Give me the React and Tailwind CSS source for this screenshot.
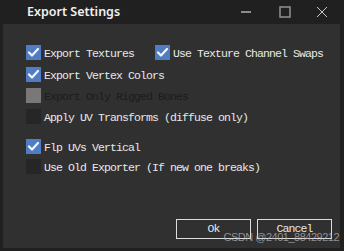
import React from 'react';

const mono = { fontFamily: '"Liberation Mono", "DejaVu Sans Mono", monospace' };

// state: 'on' | 'off' | 'disabled'
function Box({ state }) {
  if (state === 'on') {
    return (
      <div className="w-[15px] h-[15px] shrink-0 bg-[#4f7cc3] flex items-center justify-center">
        <svg width="15" height="15" viewBox="0 0 15 15">
          <path d="M3 7.5 L6 10.5 L12 4" fill="none" stroke="#f4f6fa" strokeWidth="2.2" strokeLinecap="round" strokeLinejoin="round" />
        </svg>
      </div>
    );
  }
  if (state === 'disabled') return <div className="w-[15px] h-[15px] shrink-0 bg-[#787878]" />;
  return <div className="w-[15px] h-[15px] shrink-0 bg-[#262626]" />;
}

function Check({ state, label, className = '' }) {
  return (
    <div className={`flex items-center h-[15px] gap-[3px] ${className}`}>
      <Box state={state} />
      <span
        style={mono}
        className={`text-[11.5px] tracking-[-0.9px] whitespace-nowrap leading-none pt-[2px] ${
          state === 'disabled' ? 'text-[#1c1c1c]' : 'text-[#e8e8e8]'
        }`}
      >
        {label}
      </span>
    </div>
  );
}

function Btn({ children }) {
  return (
    <button
      style={mono}
      className="w-[75px] h-[20px] border border-[#dcdcdc] bg-[#303030] text-[#e8e8e8] text-[11.5px] tracking-[-0.9px] leading-none flex items-center justify-center"
    >
      {children}
    </button>
  );
}

export default function App() {
  return (
    <div className="w-[344px] h-[251px] bg-[#202020] flex flex-col overflow-hidden">
      {/* title bar */}
      <div className="h-[24px] flex items-center shrink-0">
        <span
          className="ml-[27px] text-[12.5px] font-semibold text-[#f0f0f0] leading-none"
          style={{ fontFamily: '"Noto Sans", "Open Sans", sans-serif' }}
        >
          Export Settings
        </span>
        <div className="ml-auto flex items-center h-full">
          <svg width="12" height="12" viewBox="0 0 12 12" className="mr-[27px]">
            <path d="M1 6 H11" stroke="#8c8c8c" strokeWidth="2" />
          </svg>
          <svg width="12" height="12" viewBox="0 0 12 12" className="mr-[25px]">
            <rect x="1" y="1" width="10" height="10" fill="none" stroke="#8c8c8c" strokeWidth="1.6" />
          </svg>
          <svg width="12" height="12" viewBox="0 0 12 12" className="mr-[16px]">
            <path d="M1 1 L11 11 M11 1 L1 11" stroke="#c8c8c8" strokeWidth="1" />
          </svg>
        </div>
      </div>

      {/* body */}
      <div className="relative ml-[3px] w-[337px] h-[224px] bg-[#303030] flex flex-col pl-[23px] pt-[21px]">
        <div className="flex items-center">
          <Check state="on" label="Export Textures" />
          <Check state="on" label="Use Texture Channel Swaps" className="ml-[21px]" />
        </div>
        <Check state="on" label="Export Vertex Colors" className="mt-[7px]" />
        <Check state="disabled" label="Export Only Rigged Bones" className="mt-[6px]" />
        <Check state="off" label="Apply UV Transforms (diffuse only)" className="mt-[6px]" />
        <Check state="on" label="Flp UVs Vertical" className="mt-[15px]" />
        <Check state="off" label="Use Old Exporter (If new one breaks)" className="mt-[5px]" />

        <div className="mt-auto flex justify-end gap-[6px] pr-[8px] pb-[9px]">
          <Btn>Ok</Btn>
          <Btn>Cancel</Btn>
        </div>

        <span
          className="absolute right-[1px] bottom-[5px] text-[11px] tracking-[-0.5px] text-[#bdbdbd]/70 leading-none"
          style={{ fontFamily: '"Liberation Sans", Arial, sans-serif' }}
        >
          CSDN @2401_88429212
        </span>
      </div>
    </div>
  );
}
